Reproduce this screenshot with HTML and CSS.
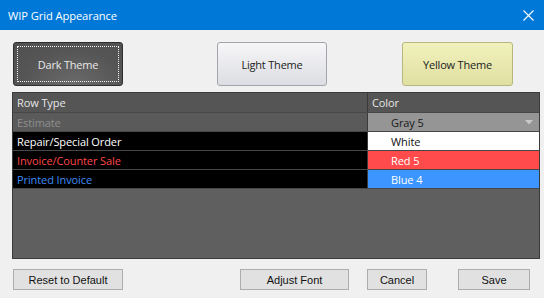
FILE: index.html
```html
<!DOCTYPE html>
<html>
<head>
<meta charset="utf-8">
<link rel="stylesheet" href="styles.css">
</head>
<body>
<div class="window">
  <div class="titlebar">
    <span class="title">WIP Grid Appearance</span>
    <svg class="close" width="11" height="11" viewBox="0 0 11 11"><path d="M0.5 0.5 L10.5 10.5 M10.5 0.5 L0.5 10.5" stroke="#fff" stroke-width="1.1" fill="none"/></svg>
  </div>
  <div class="content">
    <div class="themes">
      <button class="theme dark"><span class="focus">Dark Theme</span></button>
      <button class="theme light">Light Theme</button>
      <button class="theme yellow">Yellow Theme</button>
    </div>
    <div class="grid">
      <div class="row head">
        <div class="c1">Row Type</div>
        <div class="c2">Color</div>
      </div>
      <div class="row est">
        <div class="c1">Estimate</div>
        <div class="c2 gray">Gray 5<svg class="arrow" width="8" height="5" viewBox="0 0 8 5"><path d="M0 0 H8 L4 4.5 Z" fill="#c8c8c8"/></svg></div>
      </div>
      <div class="row">
        <div class="c1 t-white">Repair/Special Order</div>
        <div class="c2 white">White</div>
      </div>
      <div class="row">
        <div class="c1 t-red">Invoice/Counter Sale</div>
        <div class="c2 red">Red 5</div>
      </div>
      <div class="row">
        <div class="c1 t-blue">Printed Invoice</div>
        <div class="c2 blue">Blue 4</div>
      </div>
    </div>
    <div class="actions">
      <button class="btn reset">Reset to Default</button>
      <button class="btn adjust">Adjust Font</button>
      <button class="btn cancel">Cancel</button>
      <button class="btn save">Save</button>
    </div>
  </div>
</div>
</body>
</html>
```
FILE: styles.css
```css
html, body {
  margin: 0;
  padding: 0;
  background: #f0f0f0;
}
.window {
  width: 544px;
  height: 298px;
  font-family: "Liberation Sans", Arial, sans-serif;
}
.titlebar {
  height: 30px;
  background: #0078d7;
  display: flex;
  align-items: center;
  justify-content: space-between;
  padding: 0 10px 0 8px;
  box-sizing: border-box;
}
.title {
  color: #fff;
  font-size: 11.2px;
  font-family: "Open Sans", sans-serif;
  letter-spacing: -0.1px;
}
.close {
  display: block;
}
.content {
  padding: 12px 4px 0 12px;
}
.themes {
  display: flex;
  height: 44px;
}
.theme {
  box-sizing: border-box;
  width: 110px;
  height: 44px;
  border-radius: 3px;
  font-family: "Open Sans", sans-serif;
  font-size: 11px;
  letter-spacing: -0.2px;
  padding: 0;
  color: #222;
}
.dark {
  margin-left: 1px;
  background: radial-gradient(ellipse at 55% 100%, #6a6a6a 0%, #555 60%, #505050 100%);
  border: 1px solid #2e2e2e;
  color: #e8e8e8;
  padding: 3px;
}
.dark .focus {
  display: flex;
  align-items: center;
  justify-content: center;
  height: 100%;
  border: 1px dotted #f4f4f4;
  box-sizing: border-box;
}
.light {
  margin-left: 94px;
  background: linear-gradient(#f6f6f8, #dcdde2);
  border: 1px solid #a3a3ab;
}
.yellow {
  margin-left: 75px;
  width: 111px;
  background: linear-gradient(#f1f1bc, #e0e0a2);
  border: 1px solid #b7b77e;
}
.grid {
  margin-top: 6px;
  width: 528px;
  height: 167px;
  box-sizing: border-box;
  background: #5f5f5f;
  border: 1px solid #3a3a3a;
  font-family: "Open Sans", sans-serif;
  font-size: 11px;
  letter-spacing: -0.1px;
}
.row {
  display: flex;
  height: 19px;
  border-bottom: 1px solid #474747;
  box-sizing: border-box;
}
.row.head {
  height: 20px;
  background: #555555;
  color: #e6e6e6;
  border-bottom-color: #474747;
}
.c1 {
  box-sizing: border-box;
  width: 355px;
  flex: none;
  border-right: 1px solid #3a3a3a;
  padding-left: 4px;
  display: flex;
  align-items: center;
  background: #000;
}
.c2 {
  flex: 1;
  display: flex;
  align-items: center;
  padding-left: 23px;
  position: relative;
}
.head .c1, .head .c2 {
  background: #555555;
}
.head .c2 {
  padding-left: 4px;
}
.est .c1 {
  background: #5a5a5a;
  color: #8f8f8f;
}
.gray {
  background: #959595;
  color: #1a1a1a;
}
.arrow {
  position: absolute;
  right: 6px;
  top: 7px;
}
.t-white { color: #ffffff; }
.t-red { color: #ff4646; }
.t-blue { color: #3d8ef8; }
.white { background: #ffffff; color: #111; }
.red { background: #ff4b4b; color: #fff; }
.blue { background: #3d96ff; color: #fff; }
.actions {
  display: flex;
  margin-top: 10px;
  margin-left: 1px;
}
.btn {
  box-sizing: border-box;
  height: 21px;
  background: #e1e1e1;
  border: 1px solid #adadad;
  border-radius: 0;
  font-family: "Liberation Sans", Arial, sans-serif;
  font-size: 11px;
  color: #111;
  padding: 0;
}
.reset { width: 110px; }
.adjust { width: 109px; margin-left: 117px; }
.cancel { width: 60px; margin-left: 18px; }
.save { width: 72px; margin-left: 31px; }
```
